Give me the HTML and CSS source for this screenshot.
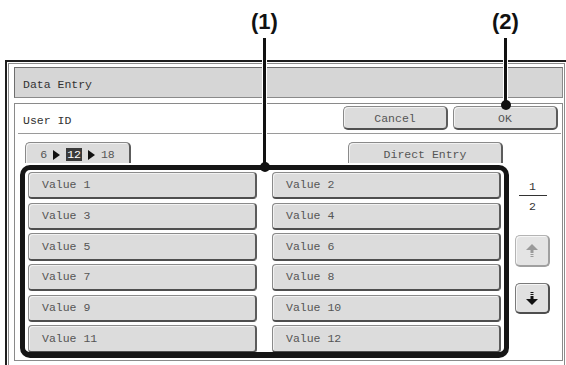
FILE: index.html
```html
<!DOCTYPE html>
<html>
<head>
<meta charset="utf-8">
<link rel="stylesheet" href="styles.css">
</head>
<body>
<div class="frame">
  <div class="inner">
    <div class="title">Data Entry</div>
    <div class="panel">
      <div class="head">
        <span class="field">User ID</span>
        <div class="actions">
          <button class="btn">Cancel</button>
          <button class="btn">OK</button>
        </div>
      </div>
      <div class="body">
        <div class="main">
          <div class="tabs">
            <div class="tab range">
              <span>6</span>
              <svg class="tri" width="7" height="10" viewBox="0 0 7 10"><polygon points="0,0 7,5 0,10" fill="#111"/></svg>
              <span class="cur">12</span>
              <svg class="tri" width="7" height="10" viewBox="0 0 7 10"><polygon points="0,0 7,5 0,10" fill="#111"/></svg>
              <span>18</span>
            </div>
            <div class="tab direct">Direct Entry</div>
          </div>
          <div class="select">
            <div class="grid">
              <button class="val">Value 1</button>
              <button class="val">Value 2</button>
              <button class="val">Value 3</button>
              <button class="val">Value 4</button>
              <button class="val">Value 5</button>
              <button class="val">Value 6</button>
              <button class="val">Value 7</button>
              <button class="val">Value 8</button>
              <button class="val">Value 9</button>
              <button class="val">Value 10</button>
              <button class="val">Value 11</button>
              <button class="val">Value 12</button>
            </div>
          </div>
        </div>
        <div class="side">
          <span class="pg">1</span>
          <span class="bar"></span>
          <span class="pg pg2">2</span>
          <button class="arrow up disabled">
            <svg width="12" height="13" viewBox="0 0 12 13"><polygon points="0,6 12,6 6,0" fill="#9a9a9a"/><rect x="4.5" y="6" width="3" height="3" fill="#9a9a9a"/><rect x="4.5" y="10" width="3" height="1" fill="#9a9a9a"/><rect x="4.5" y="12" width="3" height="1" fill="#9a9a9a"/></svg>
          </button>
          <button class="arrow down">
            <svg width="12" height="13" viewBox="0 0 12 13"><rect x="4.5" y="0" width="3" height="1" fill="#111"/><rect x="4.5" y="2" width="3" height="1" fill="#111"/><rect x="4.5" y="4" width="3" height="3" fill="#111"/><polygon points="0,7 12,7 6,13" fill="#111"/></svg>
          </button>
        </div>
      </div>
    </div>
  </div>
</div>

<div class="callout c1"><span class="num">(1)</span><span class="line l1"></span><span class="dot"></span></div>
<div class="callout c2"><span class="num">(2)</span><span class="line l2"></span><span class="dot"></span></div>
</body>
</html>
```

FILE: styles.css
```css
html, body {
  margin: 0;
  padding: 0;
}
body {
  width: 566px;
  height: 365px;
  overflow: hidden;
  position: relative;
  background: #fff;
  font-family: "Liberation Mono", "Courier New", monospace;
  font-size: 11.5px;
  color: #555;
}
button {
  font-family: inherit;
  font-size: inherit;
  color: inherit;
  padding: 0;
  margin: 0;
  cursor: default;
}

/* window frame */
.frame {
  margin: 60px 0 0 5px;
  width: 600px;
  height: 330px;
  box-sizing: border-box;
  border-top: 2px solid #1e1e1e;
  border-left: 2px solid #1e1e1e;
  padding: 1px 0 0 1px;
}
.inner {
  width: 557px;
  height: 320px;
  box-sizing: border-box;
  border: 1px solid #8c8c8c;
  padding: 3px 1px 0 5px;
}
.title {
  height: 31px;
  box-sizing: border-box;
  background: #d6d6d6;
  border: 1px solid #8a8a8a;
  border-top-color: #6e6e6e;
  border-left-color: #6e6e6e;
  padding: 10px 0 0 8px;
  line-height: 14px;
  color: #333;
}
.panel {
  margin-top: 5px;
  height: 258px;
  box-sizing: border-box;
  border: 1px solid #8a8a8a;
  background: #fff;
}

/* header row */
.head {
  display: flex;
  height: 30px;
  box-sizing: border-box;
  margin: 0 1px 0 3px;
  padding: 0 3px 0 5px;
  border-bottom: 1px solid #9a9a9a;
}
.field {
  padding-top: 10px;
  line-height: 14px;
  color: #333;
}
.actions {
  margin-left: auto;
  padding-top: 2px;
  display: flex;
  gap: 5px;
}
.btn {
  width: 105px;
  height: 24px;
  box-sizing: border-box;
  background: #dcdcdc;
  border: 1px solid #8a8a8a;
  border-right: 2px solid #5c5c5c;
  border-bottom: 2px solid #505050;
  border-radius: 5px;
  box-shadow: inset 1px 1px 0 #f2f2f2;
  padding-top: 1px;
  line-height: 19px;
  text-align: center;
}

/* body */
.body {
  display: flex;
}
.main {
  margin-left: 5px;
  width: 489px;
}
.tabs {
  display: flex;
  height: 21px;
  margin-top: 8px;
  padding-left: 5px;
}
.tab {
  box-sizing: border-box;
  height: 21px;
  background: #dcdcdc;
  border: 1px solid #8a8a8a;
  border-bottom: none;
  border-right: 2px solid #5c5c5c;
  border-radius: 5px 5px 0 0;
  box-shadow: inset 1px 1px 0 #f2f2f2;
  display: flex;
  align-items: center;
  justify-content: center;
  padding-top: 3px;
  line-height: 14px;
}
.range {
  width: 106px;
  gap: 6px;
}
.range .tri {
  display: block;
}
.cur {
  background: #3a3a3a;
  color: #fff;
  padding: 0 1px;
  line-height: 13px;
}
.direct {
  width: 155px;
  margin-left: auto;
  margin-right: 6px;
}
.select {
  margin-top: 2px;
  height: 193px;
  box-sizing: border-box;
  border: 5px solid #151515;
  border-bottom-width: 6px;
  border-radius: 10px;
  overflow: hidden;
  padding: 2px 2px 0 3px;
}
.grid {
  display: grid;
  grid-template-columns: 229px 229px;
  column-gap: 15px;
  grid-auto-rows: 27.4px;
  row-gap: 3.3px;
}
.val {
  box-sizing: border-box;
  background: #dcdcdc;
  border: 1px solid #8a8a8a;
  border-right: 2px solid #5c5c5c;
  border-bottom: 2px solid #4e4e4e;
  border-radius: 4px;
  box-shadow: inset 1px 1px 0 #f2f2f2;
  text-align: left;
  padding-left: 13px;
  line-height: 14px;
}

/* side pager */
.side {
  margin-left: 6px;
  width: 35px;
  display: flex;
  flex-direction: column;
  align-items: center;
}
.pg {
  margin-top: 46px;
  line-height: 14px;
  color: #333;
}
.pg2 {
  margin-top: 4px;
}
.bar {
  margin-top: 1px;
  width: 28px;
  height: 1px;
  background: #333;
}
.arrow {
  width: 35px;
  box-sizing: border-box;
  background: #e0e0e0;
  border: 1px solid #7a7a7a;
  border-right: 2px solid #4e4e4e;
  border-bottom: 2px solid #4e4e4e;
  border-radius: 5px;
  box-shadow: inset 1px 1px 0 #f6f6f6;
  display: flex;
  align-items: center;
  justify-content: center;
}
.arrow svg {
  display: block;
}
.up {
  margin-top: 21px;
  height: 32px;
}
.down {
  margin-top: 16px;
  height: 31px;
}
.disabled {
  border-color: #b4b4b4;
  border-right-color: #a0a0a0;
  border-bottom-color: #a0a0a0;
  background: #e4e4e4;
}

/* callouts (annotation overlay) */
.callout {
  position: absolute;
  top: 10px;
  width: 31px;
  display: flex;
  flex-direction: column;
  align-items: center;
  z-index: 2;
}
.c1 { left: 249px; }
.c2 { left: 490px; }
.num {
  font-family: "Liberation Sans", Arial, sans-serif;
  font-weight: bold;
  font-size: 22px;
  line-height: 24px;
  color: #111;
}
.line {
  width: 3px;
  margin-top: 4px;
  background: #111;
  box-shadow: 0 0 0 1px #fff;
}
.l1 { height: 129px; }
.l2 { height: 67px; }
.dot {
  width: 10px;
  height: 10px;
  border-radius: 50%;
  background: #111;
  margin-top: -5px;
}
```
